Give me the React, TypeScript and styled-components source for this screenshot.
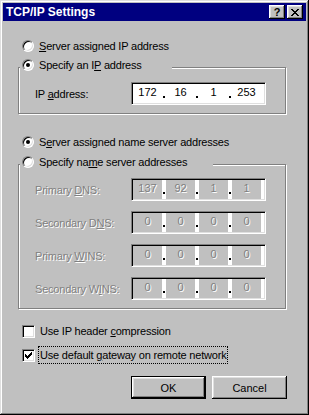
import React from 'react';
import styled, { createGlobalStyle, css } from 'styled-components';

const GlobalStyle = createGlobalStyle`
  html, body {
    margin: 0;
    padding: 0;
    background: #c0c0c0;
  }
  body {
    font-family: "Liberation Sans", Arial, sans-serif;
    font-size: 11px;
    color: #000;
  }
`;

const bevelOut = css`
  box-shadow: inset -1px -1px #000, inset 1px 1px #fff, inset -2px -2px #808080, inset 2px 2px #dfdfdf;
`;

const sunken = css`
  border: 1px solid;
  border-color: #808080 #fff #fff #808080;
  box-shadow: inset 1px 1px #000, inset -1px -1px #dfdfdf;
`;

const Window = styled.div`
  width: 309px;
  height: 415px;
  box-sizing: border-box;
  padding: 3px;
  background: #c0c0c0;
  box-shadow: inset -1px -1px #000, inset 1px 1px #dfdfdf, inset -2px -2px #808080, inset 2px 2px #fff;
  display: flex;
  flex-direction: column;
`;

const TitleBar = styled.div`
  height: 18px;
  background: #000080;
  display: flex;
  align-items: center;
  justify-content: space-between;
  padding: 0 3px;
`;

const Title = styled.span`
  color: #fff;
  font-weight: bold;
  font-size: 12px;
`;

const CaptionButtons = styled.div`
  display: flex;
  gap: 2px;
`;

const CaptionButton = styled.button`
  width: 16px;
  height: 14px;
  padding: 0;
  border: 0;
  background: #c0c0c0;
  ${bevelOut}
  display: flex;
  align-items: center;
  justify-content: center;
  font: bold 11px "Liberation Sans", Arial, sans-serif;
  color: #000;
`;

const Body = styled.div`
  padding: 17px 19px 0 15px;
  display: flex;
  flex-direction: column;
  align-items: flex-start;
  letter-spacing: -0.2px;
`;

const Option = styled.label<{ $indent?: number; $top?: number }>`
  display: flex;
  align-items: center;
  height: 16px;
  gap: 5px;
  margin-left: ${(p) => p.$indent ?? 4}px;
  margin-top: ${(p) => p.$top ?? 0}px;
  white-space: nowrap;
`;

const RadioDot = styled.span<{ $checked?: boolean }>`
  position: relative;
  width: 12px;
  height: 12px;
  box-sizing: border-box;
  border-radius: 50%;
  background: #fff;
  ${sunken}
  ${(p) =>
    p.$checked &&
    css`
      &::after {
        content: '';
        position: absolute;
        left: 3px;
        top: 3px;
        width: 4px;
        height: 4px;
        border-radius: 50%;
        background: #000;
      }
    `}
`;

const Group = styled.fieldset<{ $top?: number }>`
  margin: ${(p) => p.$top ?? 0}px 0 0 0;
  padding: 0;
  min-width: 0;
  width: 268px;
  box-sizing: border-box;
  border: 1px solid #808080;
  box-shadow: 1px 1px 0 #fff, inset 1px 1px 0 #fff;
`;

const GroupLegend = styled.legend<{ $width: number }>`
  width: ${(p) => p.$width}px;
  box-sizing: border-box;
  padding: 0 0 4px 2px;
  margin-left: 1px;
  background: #c0c0c0;
`;

const GroupBody = styled.div<{ $pad: string }>`
  padding: ${(p) => p.$pad};
  display: flex;
  flex-direction: column;
  gap: 10px;
`;

const FieldRow = styled.div`
  display: flex;
  align-items: center;
  height: 23px;
`;

const FieldLabel = styled.span<{ $disabled?: boolean }>`
  width: 96px;
  white-space: nowrap;
  ${(p) =>
    p.$disabled &&
    css`
      color: #808080;
      text-shadow: 1px 1px 0 #fff;
    `}
`;

const IpBox = styled.div`
  width: 135px;
  height: 23px;
  box-sizing: border-box;
  background: #fff;
  ${sunken}
  padding: 1px 4px 1px 1px;
  display: flex;
  letter-spacing: 0;
`;

const Segment = styled.span<{ $disabled?: boolean }>`
  width: 29px;
  text-align: center;
  line-height: 13px;
  padding-top: 2px;
  ${(p) =>
    p.$disabled &&
    css`
      background: #c0c0c0;
      color: #808080;
      text-shadow: 1px 1px 0 #fff;
    `}
`;

const Sep = styled.span`
  width: 4px;
  display: flex;
  padding: 12px 0 0 1px;
  box-sizing: border-box;
`;

const Dot = styled.span`
  width: 2px;
  height: 2px;
  background: #000;
`;

const CheckRow = styled.label<{ $top: number }>`
  display: flex;
  align-items: center;
  height: 18px;
  margin: ${(p) => p.$top}px 0 0 4px;
  white-space: nowrap;
`;

const CheckBox = styled.span`
  width: 13px;
  height: 13px;
  box-sizing: border-box;
  background: #fff;
  ${sunken}
  display: flex;
  align-items: center;
  justify-content: center;
`;

const CheckText = styled.span<{ $focused?: boolean }>`
  margin-left: 3px;
  padding: 0 1px;
  line-height: 16px;
  border: 1px dotted ${(p) => (p.$focused ? '#000' : 'transparent')};
`;

const ButtonRow = styled.div`
  align-self: stretch;
  display: flex;
  justify-content: flex-end;
  gap: 6px;
  margin-top: 12px;
`;

const Button = styled.button<{ $default?: boolean }>`
  width: 75px;
  height: 23px;
  box-sizing: border-box;
  padding: 0;
  background: #c0c0c0;
  font: 11px "Liberation Sans", Arial, sans-serif;
  color: #000;
  border: ${(p) => (p.$default ? '1px solid #000' : '0')};
  ${bevelOut}
`;

const CloseGlyph = () => {
  const rows = [
    [0, 1, 6, 7],
    [1, 2, 5, 6],
    [2, 3, 4, 5],
    [3, 4],
    [2, 3, 4, 5],
    [1, 2, 5, 6],
    [0, 1, 6, 7],
  ];
  return (
    <svg width="8" height="7" viewBox="0 0 8 7" shapeRendering="crispEdges">
      {rows.flatMap((cols, y) => cols.map((x) => <rect key={`${x}-${y}`} x={x} y={y} width="1" height="1" fill="#000" />))}
    </svg>
  );
};

const CheckGlyph = () => {
  const starts = [2, 3, 4, 3, 2, 1, 0];
  return (
    <svg width="7" height="7" viewBox="0 0 7 7" shapeRendering="crispEdges">
      {starts.map((y, x) => (
        <rect key={x} x={x} y={y} width="1" height="3" fill="#000" />
      ))}
    </svg>
  );
};

const IpField = ({ values, disabled }: { values: string[]; disabled?: boolean }) => (
  <IpBox>
    {values.map((v, i) => (
      <React.Fragment key={i}>
        {i > 0 && (
          <Sep>
            <Dot />
          </Sep>
        )}
        <Segment $disabled={disabled}>{v}</Segment>
      </React.Fragment>
    ))}
  </IpBox>
);

const dnsRows: { label: React.ReactNode; values: string[] }[] = [
  { label: <>Primary <u>D</u>NS:</>, values: ['137', '92', '1', '1'] },
  { label: <>Secondary D<u>N</u>S:</>, values: ['0', '0', '0', '0'] },
  { label: <>Primary <u>W</u>INS:</>, values: ['0', '0', '0', '0'] },
  { label: <>Secondary W<u>I</u>NS:</>, values: ['0', '0', '0', '0'] },
];

export default function App() {
  return (
    <>
      <GlobalStyle />
      <Window>
        <TitleBar>
          <Title>TCP/IP Settings</Title>
          <CaptionButtons>
            <CaptionButton>?</CaptionButton>
            <CaptionButton>
              <CloseGlyph />
            </CaptionButton>
          </CaptionButtons>
        </TitleBar>
        <Body>
          <Option>
            <RadioDot />
            <span>
              <u>S</u>erver assigned IP address
            </span>
          </Option>

          <Group $top={3}>
            <GroupLegend $width={152}>
              <Option $indent={0}>
                <RadioDot $checked />
                <span>
                  Specify an I<u>P</u> address
                </span>
              </Option>
            </GroupLegend>
            <GroupBody $pad="5px 0 8px 16px">
              <FieldRow>
                <FieldLabel>
                  IP <u>a</u>ddress:
                </FieldLabel>
                <IpField values={['172', '16', '1', '253']} />
              </FieldRow>
            </GroupBody>
          </Group>

          <Option $top={20}>
            <RadioDot $checked />
            <span>
              S<u>e</u>rver assigned name server addresses
            </span>
          </Option>

          <Group $top={4}>
            <GroupLegend $width={193}>
              <Option $indent={0}>
                <RadioDot />
                <span>
                  Specify na<u>m</u>e server addresses
                </span>
              </Option>
            </GroupLegend>
            <GroupBody $pad="4px 0 8px 16px">
              {dnsRows.map((row, i) => (
                <FieldRow key={i}>
                  <FieldLabel $disabled>{row.label}</FieldLabel>
                  <IpField values={row.values} disabled />
                </FieldRow>
              ))}
            </GroupBody>
          </Group>

          <CheckRow $top={13}>
            <CheckBox />
            <CheckText>
              Use IP header <u>c</u>ompression
            </CheckText>
          </CheckRow>
          <CheckRow $top={6}>
            <CheckBox>
              <CheckGlyph />
            </CheckBox>
            <CheckText $focused>
              Use default <u>g</u>ateway on remote network
            </CheckText>
          </CheckRow>

          <ButtonRow>
            <Button $default>OK</Button>
            <Button>Cancel</Button>
          </ButtonRow>
        </Body>
      </Window>
    </>
  );
}
